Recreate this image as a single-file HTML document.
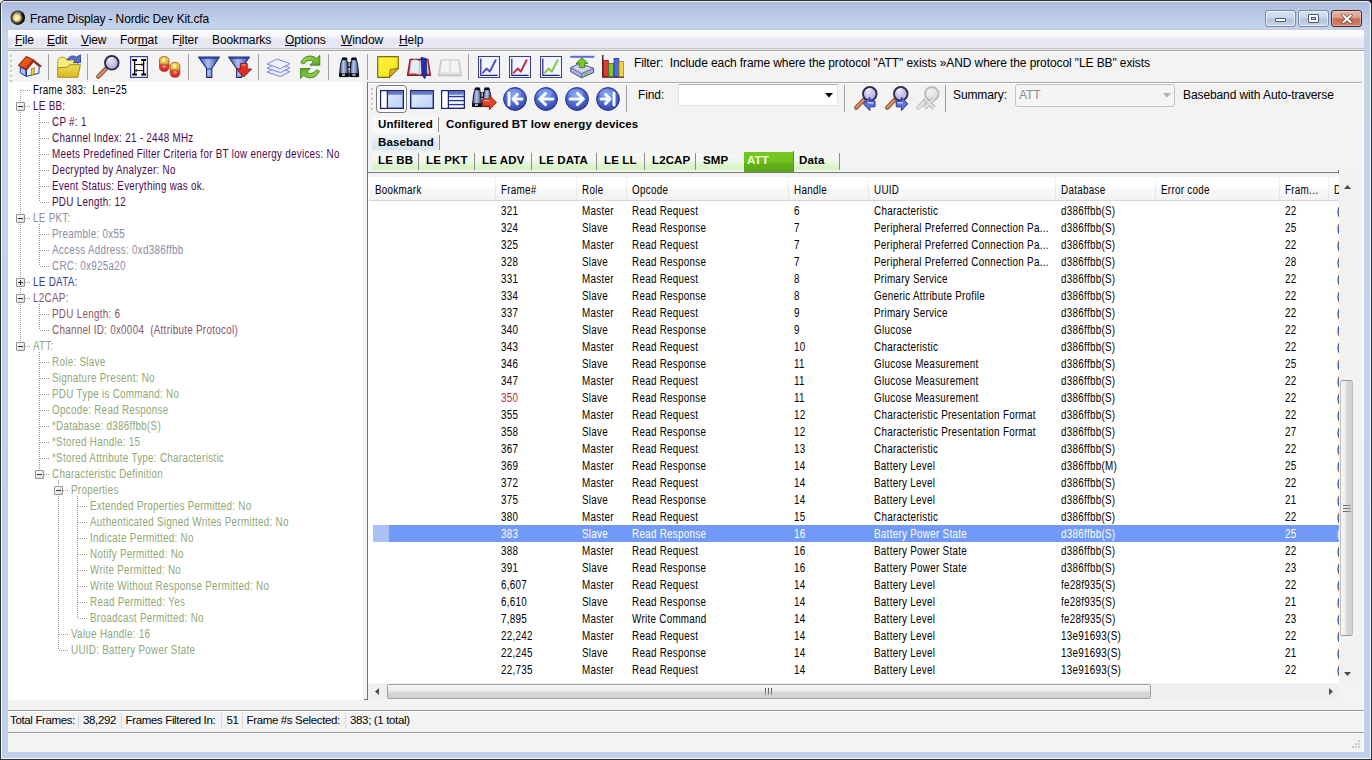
<!DOCTYPE html>
<html><head><meta charset="utf-8"><title>Frame Display - Nordic Dev Kit.cfa</title>
<style>
*{box-sizing:border-box;margin:0;padding:0}
html,body{width:1372px;height:760px;overflow:hidden;background:#1e2226}
body{position:relative;font-family:"Liberation Sans",sans-serif;font-size:11px;color:#000;-webkit-font-smoothing:antialiased}
.a{position:absolute}
.t{position:absolute;white-space:pre;line-height:16px;height:16px}
.ui{font-size:12px;letter-spacing:-0.1px}
.ms{font-size:12px;letter-spacing:.35px;transform:scaleX(.82);transform-origin:0 50%}
.b{font-weight:700}
.st{font-size:11.5px;letter-spacing:-0.35px}
#frame{left:0;top:0;width:1372px;height:760px;border:1px solid #2c3236;border-radius:5px 5px 1px 1px;background:linear-gradient(#b0bad6 0px,#b3c0e0 6px,#bccbe6 16px,#c5d4eb 25px,#c2cfe4 28px,#c3d3ea 31px,#bfd1ea 100%)}
#frame2{left:1px;top:1px;width:1370px;height:758px;border:1px solid rgba(255,255,255,.8);border-radius:4px 4px 1px 1px}
#client{left:8px;top:30px;width:1356px;height:722px;background:#f3f3f3}
#menubar{left:8px;top:30px;width:1356px;height:21px;background:linear-gradient(#fdfdfe 0,#f8f8fc 6px,#e9e9f4 9px,#e6e6f2 13px,#e9e9f4 18px,#c4c4cc 18px,#c4c4cc 19px,#eeeef2 19px,#eeeef2 20px,#a2a2a2 20px)}
#tree{left:8px;top:82px;width:355px;height:618px;background:#fff}
#list{left:369px;top:174px;width:970px;height:509px;background:#fff;overflow:hidden}
.hl{position:absolute;height:1px}
.vl{position:absolute;width:1px}
.sep{position:absolute;width:1px;background:#a0a0a0}
.row{position:absolute;left:0;height:17px;width:971px}
.row span{position:absolute;top:0;white-space:pre;line-height:17px;font-size:12px;letter-spacing:.35px;transform:scaleX(.82);transform-origin:0 50%}
.dv{position:absolute;width:1px;background-image:linear-gradient(#9a9a9a 50%,transparent 50%);background-size:1px 2px}
.dh{position:absolute;height:1px;background-image:linear-gradient(90deg,#9a9a9a 50%,transparent 50%);background-size:2px 1px}
.box{position:absolute;width:9px;height:9px;border:1px solid #919191;background:linear-gradient(135deg,#fff,#dcdcdc);border-radius:1px}
.box i{position:absolute;left:1px;top:3px;width:5px;height:1px;background:#333}
.box b{position:absolute;left:3px;top:1px;width:1px;height:5px;background:#333}
.tab{position:absolute;height:17px;line-height:16px;font-weight:700;font-size:11.5px;letter-spacing:0.12px;white-space:pre}
</style></head><body>
<div class="a" style="left:0;top:0;width:4px;height:3px;background:#e8ecf0"></div><div class="a" id="frame"></div><div class="a" id="frame2"></div>
<div class="a" id="client"></div>

<svg class="a" style="left:10px;top:10px" width="16" height="16" viewBox="0 0 16 16"><defs><radialGradient id="gl" cx="44%" cy="50%" r="56%"><stop offset="0" stop-color="#fff8c4"/><stop offset=".38" stop-color="#eee090"/><stop offset=".6" stop-color="#6a5c38"/><stop offset=".8" stop-color="#141210"/><stop offset="1" stop-color="#000"/></radialGradient></defs><circle cx="7.8" cy="7.7" r="7.2" fill="url(#gl)"/><ellipse cx="7.8" cy="3" rx="3.6" ry="1.8" fill="#b0b0a8" opacity=".55"/></svg>
<div class="t ui" style="left:30px;top:11px;color:#000;letter-spacing:-0.15px">Frame Display - Nordic Dev Kit.cfa</div>
<div class="a" style="left:1265px;top:10px;width:31px;height:17px;border:1px solid #7a8aa8;border-radius:3px;background:linear-gradient(#d6e1f1 0,#c9d6ea 48%,#b3c3dc 52%,#c6d4ea 100%);box-shadow:inset 0 0 0 1px rgba(255,255,255,.6)"><div class="a" style="left:9px;top:7px;width:11px;height:4px;border:1px solid #4a566a;background:#fff;border-radius:1px"></div></div>
<div class="a" style="left:1298px;top:10px;width:31px;height:17px;border:1px solid #7a8aa8;border-radius:3px;background:linear-gradient(#d6e1f1 0,#c9d6ea 48%,#b3c3dc 52%,#c6d4ea 100%);box-shadow:inset 0 0 0 1px rgba(255,255,255,.6)"><div class="a" style="left:9px;top:3px;width:11px;height:9px;border:1px solid #4a566a;background:#fff;border-radius:1px"><div class="a" style="left:2px;top:2px;width:5px;height:3px;border:1px solid #4a566a;background:#cfd8e8"></div></div></div>
<div class="a" style="left:1331px;top:10px;width:31px;height:17px;border:1px solid #46282a;border-radius:3px;background:linear-gradient(#e6b4a8 0,#dc9c8a 46%,#c46a4e 52%,#d08468 100%);box-shadow:inset 0 0 0 1px rgba(255,255,255,.35)"><svg class="a" style="left:9px;top:3px" width="12" height="10" viewBox="0 0 12 10"><path d="M2.4 1.4 L9.6 8.2 M9.6 1.4 L2.4 8.2" stroke="#6a4640" stroke-width="3.4" stroke-linecap="square"/><path d="M2.4 1.4 L9.6 8.2 M9.6 1.4 L2.4 8.2" stroke="#fff" stroke-width="2" stroke-linecap="square"/></svg></div>
<div class="a" id="menubar"></div>
<div class="t ui" style="left:15px;top:32px"><u>F</u>ile</div>
<div class="t ui" style="left:47px;top:32px"><u>E</u>dit</div>
<div class="t ui" style="left:81px;top:32px"><u>V</u>iew</div>
<div class="t ui" style="left:120px;top:32px">For<u>m</u>at</div>
<div class="t ui" style="left:172px;top:32px">F<u>i</u>lter</div>
<div class="t ui" style="left:212px;top:32px">Bookmarks</div>
<div class="t ui" style="left:285px;top:32px"><u>O</u>ptions</div>
<div class="t ui" style="left:341px;top:32px"><u>W</u>indow</div>
<div class="t ui" style="left:399px;top:32px"><u>H</u>elp</div>

<div class="hl" style="left:8px;top:51px;width:1356px;background:#fbfbfb"></div>
<div class="sep" style="left:48px;top:54px;height:26px"></div>
<div class="sep" style="left:87px;top:54px;height:26px"></div>
<div class="sep" style="left:188px;top:54px;height:26px"></div>
<div class="sep" style="left:258px;top:54px;height:26px"></div>
<div class="sep" style="left:328px;top:54px;height:26px"></div>
<div class="sep" style="left:468px;top:54px;height:26px"></div>
<div class="t ui" style="left:634px;top:55px">Filter:  Include each frame where the protocol "ATT" exists »AND where the protocol "LE BB" exists</div>
<div class="a" id="tree"></div>
<div class="t ms" style="left:32.5px;top:82px;color:#000">Frame 383:  Len=25</div>
<div class="dh" style="left:21px;top:90px;width:9px"></div>
<div class="t ms" style="left:32.5px;top:98px;color:#4e084e">LE BB:</div>
<div class="dh" style="left:21px;top:106px;width:9px"></div>
<div class="t ms" style="left:51.5px;top:114px;color:#4e084e">CP #: 1</div>
<div class="dh" style="left:40px;top:122px;width:9px"></div>
<div class="t ms" style="left:51.5px;top:130px;color:#4e084e">Channel Index: 21 - 2448 MHz</div>
<div class="dh" style="left:40px;top:138px;width:9px"></div>
<div class="t ms" style="left:51.5px;top:146px;color:#4e084e">Meets Predefined Filter Criteria for BT low energy devices: No</div>
<div class="dh" style="left:40px;top:154px;width:9px"></div>
<div class="t ms" style="left:51.5px;top:162px;color:#4e084e">Decrypted by Analyzer: No</div>
<div class="dh" style="left:40px;top:170px;width:9px"></div>
<div class="t ms" style="left:51.5px;top:178px;color:#4e084e">Event Status: Everything was ok.</div>
<div class="dh" style="left:40px;top:186px;width:9px"></div>
<div class="t ms" style="left:51.5px;top:194px;color:#4e084e">PDU Length: 12</div>
<div class="dh" style="left:40px;top:202px;width:9px"></div>
<div class="t ms" style="left:32.5px;top:210px;color:#8a8aa6">LE PKT:</div>
<div class="dh" style="left:21px;top:218px;width:9px"></div>
<div class="t ms" style="left:51.5px;top:226px;color:#8a8aa6">Preamble: 0x55</div>
<div class="dh" style="left:40px;top:234px;width:9px"></div>
<div class="t ms" style="left:51.5px;top:242px;color:#8a8aa6">Access Address: 0xd386ffbb</div>
<div class="dh" style="left:40px;top:250px;width:9px"></div>
<div class="t ms" style="left:51.5px;top:258px;color:#8a8aa6">CRC: 0x925a20</div>
<div class="dh" style="left:40px;top:266px;width:9px"></div>
<div class="t ms" style="left:32.5px;top:274px;color:#3a3a9a">LE DATA:</div>
<div class="dh" style="left:21px;top:282px;width:9px"></div>
<div class="t ms" style="left:32.5px;top:290px;color:#84566a">L2CAP:</div>
<div class="dh" style="left:21px;top:298px;width:9px"></div>
<div class="t ms" style="left:51.5px;top:306px;color:#84566a">PDU Length: 6</div>
<div class="dh" style="left:40px;top:314px;width:9px"></div>
<div class="t ms" style="left:51.5px;top:322px;color:#84566a">Channel ID: 0x0004  (Attribute Protocol)</div>
<div class="dh" style="left:40px;top:330px;width:9px"></div>
<div class="t ms" style="left:32.5px;top:338px;color:#8ea876">ATT:</div>
<div class="dh" style="left:21px;top:346px;width:9px"></div>
<div class="t ms" style="left:51.5px;top:354px;color:#8ea876">Role: Slave</div>
<div class="dh" style="left:40px;top:362px;width:9px"></div>
<div class="t ms" style="left:51.5px;top:370px;color:#8ea876">Signature Present: No</div>
<div class="dh" style="left:40px;top:378px;width:9px"></div>
<div class="t ms" style="left:51.5px;top:386px;color:#8ea876">PDU Type is Command: No</div>
<div class="dh" style="left:40px;top:394px;width:9px"></div>
<div class="t ms" style="left:51.5px;top:402px;color:#8ea876">Opcode: Read Response</div>
<div class="dh" style="left:40px;top:410px;width:9px"></div>
<div class="t ms" style="left:51.5px;top:418px;color:#8ea876">*Database: d386ffbb(S)</div>
<div class="dh" style="left:40px;top:426px;width:9px"></div>
<div class="t ms" style="left:51.5px;top:434px;color:#8ea876">*Stored Handle: 15</div>
<div class="dh" style="left:40px;top:442px;width:9px"></div>
<div class="t ms" style="left:51.5px;top:450px;color:#8ea876">*Stored Attribute Type: Characteristic</div>
<div class="dh" style="left:40px;top:458px;width:9px"></div>
<div class="t ms" style="left:51.5px;top:466px;color:#8ea876">Characteristic Definition</div>
<div class="dh" style="left:40px;top:474px;width:9px"></div>
<div class="t ms" style="left:70.5px;top:482px;color:#8ea876">Properties</div>
<div class="dh" style="left:59px;top:490px;width:9px"></div>
<div class="t ms" style="left:89.5px;top:498px;color:#8ea876">Extended Properties Permitted: No</div>
<div class="dh" style="left:78px;top:506px;width:9px"></div>
<div class="t ms" style="left:89.5px;top:514px;color:#8ea876">Authenticated Signed Writes Permitted: No</div>
<div class="dh" style="left:78px;top:522px;width:9px"></div>
<div class="t ms" style="left:89.5px;top:530px;color:#8ea876">Indicate Permitted: No</div>
<div class="dh" style="left:78px;top:538px;width:9px"></div>
<div class="t ms" style="left:89.5px;top:546px;color:#8ea876">Notify Permitted: No</div>
<div class="dh" style="left:78px;top:554px;width:9px"></div>
<div class="t ms" style="left:89.5px;top:562px;color:#8ea876">Write Permitted: No</div>
<div class="dh" style="left:78px;top:570px;width:9px"></div>
<div class="t ms" style="left:89.5px;top:578px;color:#8ea876">Write Without Response Permitted: No</div>
<div class="dh" style="left:78px;top:586px;width:9px"></div>
<div class="t ms" style="left:89.5px;top:594px;color:#8ea876">Read Permitted: Yes</div>
<div class="dh" style="left:78px;top:602px;width:9px"></div>
<div class="t ms" style="left:89.5px;top:610px;color:#8ea876">Broadcast Permitted: No</div>
<div class="dh" style="left:78px;top:618px;width:9px"></div>
<div class="t ms" style="left:70.5px;top:626px;color:#8ea876">Value Handle: 16</div>
<div class="dh" style="left:59px;top:634px;width:9px"></div>
<div class="t ms" style="left:70.5px;top:642px;color:#8ea876">UUID: Battery Power State</div>
<div class="dh" style="left:59px;top:650px;width:9px"></div>
<div class="dv" style="left:20px;top:90px;height:256px"></div>
<div class="dv" style="left:39px;top:112px;height:90px"></div>
<div class="dv" style="left:39px;top:224px;height:42px"></div>
<div class="dv" style="left:39px;top:304px;height:26px"></div>
<div class="dv" style="left:39px;top:352px;height:122px"></div>
<div class="dv" style="left:58px;top:480px;height:170px"></div>
<div class="dv" style="left:77px;top:496px;height:122px"></div>
<div class="box" style="left:16px;top:102px"><i></i></div>
<div class="box" style="left:16px;top:214px"><i></i></div>
<div class="box" style="left:16px;top:278px"><i></i><b></b></div>
<div class="box" style="left:16px;top:294px"><i></i></div>
<div class="box" style="left:16px;top:342px"><i></i></div>
<div class="box" style="left:35px;top:470px"><i></i></div>
<div class="box" style="left:54px;top:486px"><i></i></div>
<div class="a" style="left:364px;top:82px;width:3px;height:620px;background:#f3f3f3"></div>
<div class="vl" style="left:367px;top:54px;height:26px;background:#a0a0a0"></div>
<div class="vl" style="left:367px;top:82px;height:618px;background:#757575"></div>
<div class="hl" style="left:364px;top:699px;width:4px;background:#757575"></div>
<div class="hl" style="left:368px;top:82px;width:996px;background:#a9a9a9"></div>
<div class="hl" style="left:368px;top:83px;width:996px;background:#fff"></div>
<div class="sep" style="left:626px;top:85px;height:27px"></div>
<div class="sep" style="left:844px;top:85px;height:27px"></div>
<div class="sep" style="left:945px;top:85px;height:27px"></div>
<div class="t ui" style="left:638px;top:87px">Find:</div>
<div class="a" style="left:678px;top:84px;width:160px;height:22px;background:#fff;border:1px solid #e3e3e3;border-top-color:#abadb3"><svg class="a" style="left:146px;top:8px" width="8" height="5"><path d="M0 0h8L4 4.5z" fill="#000"/></svg></div>
<div class="t ui" style="left:953px;top:87px">Summary:</div>
<div class="a" style="left:1015px;top:84px;width:160px;height:23px;background:#f5f5f5;border:1px solid #c3c3c3;border-radius:3px"><div class="t ui" style="left:3px;top:2px;color:#8c8c8c">ATT</div><svg class="a" style="left:147px;top:8px" width="8" height="5"><path d="M0 0h8L4 4.5z" fill="#b0b0b0"/></svg></div>
<div class="t ui" style="left:1183px;top:87px">Baseband with Auto-traverse</div>
<div class="a" style="left:372px;top:117px;width:66px;height:16px;background:#f8f8f8"></div>
<div class="tab" style="left:378px;top:116px">Unfiltered</div>
<div class="sep" style="left:438px;top:117px;height:15px;background:#8c8c8c"></div>
<div class="tab" style="left:446px;top:116px">Configured BT low energy devices</div>
<div class="a" style="left:372px;top:135px;width:66px;height:15px;background:linear-gradient(#eef3f9,#deebf7 60%,#d5e6f6)"></div>
<div class="tab" style="left:378px;top:134px">Baseband</div>
<div class="sep" style="left:439px;top:135px;height:15px;background:#8c8c8c"></div>
<div class="a" style="left:372px;top:153px;width:46px;height:17px;background:linear-gradient(#f7f8f6 0,#f1f6ee 45%,#dcf4cc 75%,#d4f3c0 100%)"></div>
<div class="tab" style="left:378px;top:152px">LE BB</div>
<div class="sep" style="left:418px;top:153px;height:17px;background:#8c8c8c"></div>
<div class="a" style="left:419px;top:153px;width:55px;height:17px;background:linear-gradient(#f7f8f6 0,#f1f6ee 45%,#dcf4cc 75%,#d4f3c0 100%)"></div>
<div class="tab" style="left:426px;top:152px">LE PKT</div>
<div class="sep" style="left:474px;top:153px;height:17px;background:#8c8c8c"></div>
<div class="a" style="left:475px;top:153px;width:56px;height:17px;background:linear-gradient(#f7f8f6 0,#f1f6ee 45%,#dcf4cc 75%,#d4f3c0 100%)"></div>
<div class="tab" style="left:482px;top:152px">LE ADV</div>
<div class="sep" style="left:531px;top:153px;height:17px;background:#8c8c8c"></div>
<div class="a" style="left:532px;top:153px;width:64px;height:17px;background:linear-gradient(#f7f8f6 0,#f1f6ee 45%,#dcf4cc 75%,#d4f3c0 100%)"></div>
<div class="tab" style="left:539px;top:152px">LE DATA</div>
<div class="sep" style="left:596px;top:153px;height:17px;background:#8c8c8c"></div>
<div class="a" style="left:597px;top:153px;width:47px;height:17px;background:linear-gradient(#f7f8f6 0,#f1f6ee 45%,#dcf4cc 75%,#d4f3c0 100%)"></div>
<div class="tab" style="left:604px;top:152px">LE LL</div>
<div class="sep" style="left:644px;top:153px;height:17px;background:#8c8c8c"></div>
<div class="a" style="left:645px;top:153px;width:50px;height:17px;background:linear-gradient(#f7f8f6 0,#f1f6ee 45%,#dcf4cc 75%,#d4f3c0 100%)"></div>
<div class="tab" style="left:652px;top:152px">L2CAP</div>
<div class="sep" style="left:695px;top:153px;height:17px;background:#8c8c8c"></div>
<div class="a" style="left:696px;top:153px;width:48px;height:17px;background:linear-gradient(#f7f8f6 0,#f1f6ee 45%,#dcf4cc 75%,#d4f3c0 100%)"></div>
<div class="tab" style="left:703px;top:152px">SMP</div>
<div class="sep" style="left:744px;top:153px;height:17px;background:#8c8c8c"></div>
<div class="a" style="left:744px;top:152px;width:49px;height:20px;background:linear-gradient(#74c820 0,#70c21e 50%,#62b01a 58%,#5aa616 100%)"></div>
<div class="tab" style="left:747px;top:152px;color:#f2ffd8">ATT</div>
<div class="sep" style="left:793px;top:151px;height:21px;background:#6c7c64"></div>
<div class="a" style="left:794px;top:153px;width:45px;height:17px;background:linear-gradient(#f7f8f6 0,#f1f6ee 45%,#dcf4cc 75%,#d4f3c0 100%)"></div>
<div class="tab" style="left:799px;top:152px">Data</div>
<div class="sep" style="left:839px;top:153px;height:17px;background:#8c8c8c"></div>
<div class="hl" style="left:368px;top:172px;width:971px;background:#7a7a7a"></div>
<div class="vl" style="left:1338px;top:170px;height:3px;background:#7a7a7a"></div>
<div class="a" style="left:368px;top:177px;width:1px;height:507px;background:#fff"></div>
<div class="a" id="list">
<div class="a" style="left:0;top:0;width:971px;height:3px;background:#f3f3f3"></div>
<div class="a" style="left:0;top:3px;width:971px;height:24px;background:linear-gradient(#fff 0,#fff 45%,#f8f8f9 55%,#f3f3f4 100%);border-bottom:1px solid #d5d5d5"></div>
<div class="t ms" style="left:6px;top:8px">Bookmark</div>
<div class="t ms" style="left:132px;top:8px">Frame#</div>
<div class="t ms" style="left:213px;top:8px">Role</div>
<div class="t ms" style="left:263px;top:8px">Opcode</div>
<div class="t ms" style="left:425px;top:8px">Handle</div>
<div class="t ms" style="left:505px;top:8px">UUID</div>
<div class="t ms" style="left:692px;top:8px">Database</div>
<div class="t ms" style="left:792px;top:8px">Error code</div>
<div class="t ms" style="left:916px;top:8px">Fram...</div>
<div class="t ms" style="left:965px;top:8px">D</div>
<div class="vl" style="left:126px;top:3px;height:23px;background:linear-gradient(#f4f4f4,#e3e4e6)"></div>
<div class="vl" style="left:207px;top:3px;height:23px;background:linear-gradient(#f4f4f4,#e3e4e6)"></div>
<div class="vl" style="left:257px;top:3px;height:23px;background:linear-gradient(#f4f4f4,#e3e4e6)"></div>
<div class="vl" style="left:419px;top:3px;height:23px;background:linear-gradient(#f4f4f4,#e3e4e6)"></div>
<div class="vl" style="left:499px;top:3px;height:23px;background:linear-gradient(#f4f4f4,#e3e4e6)"></div>
<div class="vl" style="left:686px;top:3px;height:23px;background:linear-gradient(#f4f4f4,#e3e4e6)"></div>
<div class="vl" style="left:786px;top:3px;height:23px;background:linear-gradient(#f4f4f4,#e3e4e6)"></div>
<div class="vl" style="left:910px;top:3px;height:23px;background:linear-gradient(#f4f4f4,#e3e4e6)"></div>
<div class="vl" style="left:959px;top:3px;height:23px;background:linear-gradient(#f4f4f4,#e3e4e6)"></div>
<div class="row" style="top:29px">
<span style="left:132px">321</span>
<span style="left:213px">Master</span>
<span style="left:263px">Read Request</span>
<span style="left:425px">6</span>
<span style="left:505px">Characteristic</span>
<span style="left:692px">d386ffbb(S)</span>
<span style="left:916px">22</span>
<span style="left:968px">(</span>
</div>
<div class="row" style="top:46px">
<span style="left:132px">324</span>
<span style="left:213px">Slave</span>
<span style="left:263px">Read Response</span>
<span style="left:425px">7</span>
<span style="left:505px">Peripheral Preferred Connection Pa...</span>
<span style="left:692px">d386ffbb(S)</span>
<span style="left:916px">25</span>
<span style="left:968px">(</span>
</div>
<div class="row" style="top:63px">
<span style="left:132px">325</span>
<span style="left:213px">Master</span>
<span style="left:263px">Read Request</span>
<span style="left:425px">7</span>
<span style="left:505px">Peripheral Preferred Connection Pa...</span>
<span style="left:692px">d386ffbb(S)</span>
<span style="left:916px">22</span>
<span style="left:968px">(</span>
</div>
<div class="row" style="top:80px">
<span style="left:132px">328</span>
<span style="left:213px">Slave</span>
<span style="left:263px">Read Response</span>
<span style="left:425px">7</span>
<span style="left:505px">Peripheral Preferred Connection Pa...</span>
<span style="left:692px">d386ffbb(S)</span>
<span style="left:916px">28</span>
<span style="left:968px">(</span>
</div>
<div class="row" style="top:97px">
<span style="left:132px">331</span>
<span style="left:213px">Master</span>
<span style="left:263px">Read Request</span>
<span style="left:425px">8</span>
<span style="left:505px">Primary Service</span>
<span style="left:692px">d386ffbb(S)</span>
<span style="left:916px">22</span>
<span style="left:968px">(</span>
</div>
<div class="row" style="top:114px">
<span style="left:132px">334</span>
<span style="left:213px">Slave</span>
<span style="left:263px">Read Response</span>
<span style="left:425px">8</span>
<span style="left:505px">Generic Attribute Profile</span>
<span style="left:692px">d386ffbb(S)</span>
<span style="left:916px">22</span>
<span style="left:968px">(</span>
</div>
<div class="row" style="top:131px">
<span style="left:132px">337</span>
<span style="left:213px">Master</span>
<span style="left:263px">Read Request</span>
<span style="left:425px">9</span>
<span style="left:505px">Primary Service</span>
<span style="left:692px">d386ffbb(S)</span>
<span style="left:916px">22</span>
<span style="left:968px">(</span>
</div>
<div class="row" style="top:148px">
<span style="left:132px">340</span>
<span style="left:213px">Slave</span>
<span style="left:263px">Read Response</span>
<span style="left:425px">9</span>
<span style="left:505px">Glucose</span>
<span style="left:692px">d386ffbb(S)</span>
<span style="left:916px">22</span>
<span style="left:968px">(</span>
</div>
<div class="row" style="top:165px">
<span style="left:132px">343</span>
<span style="left:213px">Master</span>
<span style="left:263px">Read Request</span>
<span style="left:425px">10</span>
<span style="left:505px">Characteristic</span>
<span style="left:692px">d386ffbb(S)</span>
<span style="left:916px">22</span>
<span style="left:968px">(</span>
</div>
<div class="row" style="top:182px">
<span style="left:132px">346</span>
<span style="left:213px">Slave</span>
<span style="left:263px">Read Response</span>
<span style="left:425px">11</span>
<span style="left:505px">Glucose Measurement</span>
<span style="left:692px">d386ffbb(S)</span>
<span style="left:916px">25</span>
<span style="left:968px">(</span>
</div>
<div class="row" style="top:199px">
<span style="left:132px">347</span>
<span style="left:213px">Master</span>
<span style="left:263px">Read Request</span>
<span style="left:425px">11</span>
<span style="left:505px">Glucose Measurement</span>
<span style="left:692px">d386ffbb(S)</span>
<span style="left:916px">22</span>
<span style="left:968px">(</span>
</div>
<div class="row" style="top:216px">
<span style="left:132px;color:#b03040">350</span>
<span style="left:213px">Slave</span>
<span style="left:263px">Read Response</span>
<span style="left:425px">11</span>
<span style="left:505px">Glucose Measurement</span>
<span style="left:692px">d386ffbb(S)</span>
<span style="left:916px">22</span>
<span style="left:968px">(</span>
</div>
<div class="row" style="top:233px">
<span style="left:132px">355</span>
<span style="left:213px">Master</span>
<span style="left:263px">Read Request</span>
<span style="left:425px">12</span>
<span style="left:505px">Characteristic Presentation Format</span>
<span style="left:692px">d386ffbb(S)</span>
<span style="left:916px">22</span>
<span style="left:968px">(</span>
</div>
<div class="row" style="top:250px">
<span style="left:132px">358</span>
<span style="left:213px">Slave</span>
<span style="left:263px">Read Response</span>
<span style="left:425px">12</span>
<span style="left:505px">Characteristic Presentation Format</span>
<span style="left:692px">d386ffbb(S)</span>
<span style="left:916px">27</span>
<span style="left:968px">(</span>
</div>
<div class="row" style="top:267px">
<span style="left:132px">367</span>
<span style="left:213px">Master</span>
<span style="left:263px">Read Request</span>
<span style="left:425px">13</span>
<span style="left:505px">Characteristic</span>
<span style="left:692px">d386ffbb(S)</span>
<span style="left:916px">22</span>
<span style="left:968px">(</span>
</div>
<div class="row" style="top:284px">
<span style="left:132px">369</span>
<span style="left:213px">Master</span>
<span style="left:263px">Read Response</span>
<span style="left:425px">14</span>
<span style="left:505px">Battery Level</span>
<span style="left:692px">d386ffbb(M)</span>
<span style="left:916px">25</span>
<span style="left:968px">(</span>
</div>
<div class="row" style="top:301px">
<span style="left:132px">372</span>
<span style="left:213px">Master</span>
<span style="left:263px">Read Request</span>
<span style="left:425px">14</span>
<span style="left:505px">Battery Level</span>
<span style="left:692px">d386ffbb(S)</span>
<span style="left:916px">22</span>
<span style="left:968px">(</span>
</div>
<div class="row" style="top:318px">
<span style="left:132px">375</span>
<span style="left:213px">Slave</span>
<span style="left:263px">Read Response</span>
<span style="left:425px">14</span>
<span style="left:505px">Battery Level</span>
<span style="left:692px">d386ffbb(S)</span>
<span style="left:916px">21</span>
<span style="left:968px">(</span>
</div>
<div class="row" style="top:335px">
<span style="left:132px">380</span>
<span style="left:213px">Master</span>
<span style="left:263px">Read Request</span>
<span style="left:425px">15</span>
<span style="left:505px">Characteristic</span>
<span style="left:692px">d386ffbb(S)</span>
<span style="left:916px">22</span>
<span style="left:968px">(</span>
</div>
<div class="a" style="left:4px;top:351px;width:16px;height:17px;background:#a9c1f6"></div>
<div class="a" style="left:20px;top:351px;width:951px;height:17px;background:#7199f7"></div>
<div class="row" style="top:352px;color:#fff">
<span style="left:132px">383</span>
<span style="left:213px">Slave</span>
<span style="left:263px">Read Response</span>
<span style="left:425px">16</span>
<span style="left:505px">Battery Power State</span>
<span style="left:692px">d386ffbb(S)</span>
<span style="left:916px">25</span>
<span style="left:968px">(</span>
</div>
<div class="row" style="top:369px">
<span style="left:132px">388</span>
<span style="left:213px">Master</span>
<span style="left:263px">Read Request</span>
<span style="left:425px">16</span>
<span style="left:505px">Battery Power State</span>
<span style="left:692px">d386ffbb(S)</span>
<span style="left:916px">22</span>
<span style="left:968px">(</span>
</div>
<div class="row" style="top:386px">
<span style="left:132px">391</span>
<span style="left:213px">Slave</span>
<span style="left:263px">Read Response</span>
<span style="left:425px">16</span>
<span style="left:505px">Battery Power State</span>
<span style="left:692px">d386ffbb(S)</span>
<span style="left:916px">23</span>
<span style="left:968px">(</span>
</div>
<div class="row" style="top:403px">
<span style="left:132px">6,607</span>
<span style="left:213px">Master</span>
<span style="left:263px">Read Request</span>
<span style="left:425px">14</span>
<span style="left:505px">Battery Level</span>
<span style="left:692px">fe28f935(S)</span>
<span style="left:916px">22</span>
<span style="left:968px">(</span>
</div>
<div class="row" style="top:420px">
<span style="left:132px">6,610</span>
<span style="left:213px">Slave</span>
<span style="left:263px">Read Response</span>
<span style="left:425px">14</span>
<span style="left:505px">Battery Level</span>
<span style="left:692px">fe28f935(S)</span>
<span style="left:916px">21</span>
<span style="left:968px">(</span>
</div>
<div class="row" style="top:437px">
<span style="left:132px">7,895</span>
<span style="left:213px">Master</span>
<span style="left:263px">Write Command</span>
<span style="left:425px">14</span>
<span style="left:505px">Battery Level</span>
<span style="left:692px">fe28f935(S)</span>
<span style="left:916px">23</span>
<span style="left:968px">(</span>
</div>
<div class="row" style="top:454px">
<span style="left:132px">22,242</span>
<span style="left:213px">Master</span>
<span style="left:263px">Read Request</span>
<span style="left:425px">14</span>
<span style="left:505px">Battery Level</span>
<span style="left:692px">13e91693(S)</span>
<span style="left:916px">22</span>
<span style="left:968px">(</span>
</div>
<div class="row" style="top:471px">
<span style="left:132px">22,245</span>
<span style="left:213px">Slave</span>
<span style="left:263px">Read Response</span>
<span style="left:425px">14</span>
<span style="left:505px">Battery Level</span>
<span style="left:692px">13e91693(S)</span>
<span style="left:916px">21</span>
<span style="left:968px">(</span>
</div>
<div class="row" style="top:488px">
<span style="left:132px">22,735</span>
<span style="left:213px">Master</span>
<span style="left:263px">Read Request</span>
<span style="left:425px">14</span>
<span style="left:505px">Battery Level</span>
<span style="left:692px">13e91693(S)</span>
<span style="left:916px">22</span>
<span style="left:968px">(</span>
</div>
</div>
<div class="a" style="left:1339px;top:174px;width:25px;height:509px;background:#f1f1f1"></div>
<div class="a" style="left:1362px;top:51px;width:2px;height:701px;background:#f9f9f9"></div>
<svg class="a" style="left:1344px;top:185px" width="7" height="4"><path d="M0 4L3.5 0L7 4z" fill="#4c4c4c"/></svg>
<svg class="a" style="left:1344px;top:672px" width="7" height="4"><path d="M0 0h7L3.5 4z" fill="#4c4c4c"/></svg>
<div class="a" style="left:1340px;top:380px;width:13px;height:256px;border:1px solid #bcbcbc;border-top-color:#9c9c9c;border-bottom-color:#9c9c9c;border-radius:2px;background:linear-gradient(90deg,#f8f8f8 0,#ececec 40%,#d6d6d6 55%,#cfcfcf 100%)"></div>
<div class="hl" style="left:1343px;top:505px;width:8px;background:linear-gradient(90deg,#5a5a5a,#9a9a9a)"></div>
<div class="hl" style="left:1343px;top:508px;width:8px;background:linear-gradient(90deg,#5a5a5a,#9a9a9a)"></div>
<div class="hl" style="left:1343px;top:511px;width:8px;background:linear-gradient(90deg,#5a5a5a,#9a9a9a)"></div>
<div class="a" style="left:368px;top:684px;width:971px;height:15px;background:#efefef"></div>
<svg class="a" style="left:375px;top:688px" width="4" height="7"><path d="M4 0v7L0 3.5z" fill="#4c4c4c"/></svg>
<svg class="a" style="left:1329px;top:688px" width="4" height="7"><path d="M0 0v7l4-3.5z" fill="#4c4c4c"/></svg>
<div class="a" style="left:387px;top:684px;width:764px;height:15px;border:1px solid #9e9e9e;border-radius:2px;background:linear-gradient(#f6f6f6 0,#ebebeb 45%,#d8d8d8 55%,#d2d2d2 100%)"></div>
<div class="vl" style="left:765px;top:688px;height:7px;background:linear-gradient(#4a4a4a,#9a9a9a)"></div>
<div class="vl" style="left:768px;top:688px;height:7px;background:linear-gradient(#4a4a4a,#9a9a9a)"></div>
<div class="vl" style="left:771px;top:688px;height:7px;background:linear-gradient(#4a4a4a,#9a9a9a)"></div>
<div class="a" style="left:1358px;top:746px;width:2px;height:2px;background:#cccccc"></div>
<div class="a" style="left:1355px;top:746px;width:2px;height:2px;background:#cccccc"></div>
<div class="a" style="left:1358px;top:743px;width:2px;height:2px;background:#cccccc"></div>
<div class="a" style="left:1352px;top:746px;width:2px;height:2px;background:#cccccc"></div>
<div class="a" style="left:1355px;top:743px;width:2px;height:2px;background:#cccccc"></div>
<div class="a" style="left:1358px;top:740px;width:2px;height:2px;background:#cccccc"></div>
<div class="hl" style="left:8px;top:710px;width:1356px;background:#9a9a9a"></div>
<div class="hl" style="left:8px;top:711px;width:1356px;background:#fff"></div>
<div class="hl" style="left:8px;top:732px;width:1356px;background:#9a9a9a"></div>
<div class="hl" style="left:8px;top:733px;width:1356px;background:#fff"></div>
<div class="t st" style="left:10px;top:712px">Total Frames:</div>
<div class="t st" style="left:83px;top:712px">38,292</div>
<div class="t st" style="left:125.5px;top:712px">Frames Filtered In:</div>
<div class="t st" style="left:226.5px;top:712px">51</div>
<div class="t st" style="left:246.5px;top:712px">Frame #s Selected:</div>
<div class="t st" style="left:350px;top:712px">383; (1 total)</div>
<div class="vl" style="left:78px;top:713px;height:16px;background:#dadada"></div>
<div class="vl" style="left:121px;top:713px;height:16px;background:#dadada"></div>
<div class="vl" style="left:221px;top:713px;height:16px;background:#dadada"></div>
<div class="vl" style="left:242px;top:713px;height:16px;background:#dadada"></div>
<div class="vl" style="left:345px;top:713px;height:16px;background:#dadada"></div>
<svg width="0" height="0" style="position:absolute"><defs>
<linearGradient id="gRoof" x1="0" y1="0" x2="1" y2="1"><stop offset="0" stop-color="#f47a1c"/><stop offset="1" stop-color="#d9301c"/></linearGradient>
<linearGradient id="gFold" x1="0" y1="0" x2="0" y2="1"><stop offset="0" stop-color="#f0de50"/><stop offset="1" stop-color="#d8b824"/></linearGradient>
<radialGradient id="gLens" cx="40%" cy="35%" r="70%"><stop offset="0" stop-color="#e6e2f6"/><stop offset="1" stop-color="#a8a4d6"/></radialGradient>
<radialGradient id="gLensD" cx="40%" cy="35%" r="70%"><stop offset="0" stop-color="#f2f2f2"/><stop offset="1" stop-color="#dcdcdc"/></radialGradient>
<linearGradient id="gFun" x1="0" y1="0" x2="1" y2="0"><stop offset="0" stop-color="#3c55b8"/><stop offset=".45" stop-color="#a9c0f2"/><stop offset="1" stop-color="#3048a8"/></linearGradient>
<linearGradient id="gCyl" x1="0" y1="0" x2="0" y2="1"><stop offset="0" stop-color="#e8d84a"/><stop offset=".45" stop-color="#d8b23a"/><stop offset=".55" stop-color="#e04a34"/><stop offset="1" stop-color="#c82a22"/></linearGradient>
<linearGradient id="gGrn" x1="0" y1="0" x2="1" y2="1"><stop offset="0" stop-color="#a6e04a"/><stop offset="1" stop-color="#5aa828"/></linearGradient>
<linearGradient id="gBin" x1="0" y1="0" x2="1" y2="0"><stop offset="0" stop-color="#3a4a7a"/><stop offset=".45" stop-color="#b9c6ee"/><stop offset="1" stop-color="#33406c"/></linearGradient>
<linearGradient id="gWin" x1="0" y1="0" x2="1" y2="1"><stop offset="0" stop-color="#e6f0fb"/><stop offset="1" stop-color="#b7d3f3"/></linearGradient>
<linearGradient id="gTit" x1="0" y1="0" x2="0" y2="1"><stop offset="0" stop-color="#4a58b4"/><stop offset="1" stop-color="#8a9ee0"/></linearGradient>
<radialGradient id="gNav" cx="45%" cy="35%" r="70%"><stop offset="0" stop-color="#7c9cf0"/><stop offset=".6" stop-color="#4a64cc"/><stop offset="1" stop-color="#2c3c98"/></radialGradient>
<linearGradient id="gHan" x1="0" y1="0" x2="1" y2="1"><stop offset="0" stop-color="#f2b48c"/><stop offset="1" stop-color="#c8643c"/></linearGradient>
<linearGradient id="gNote" x1="0" y1="0" x2="1" y2="1"><stop offset="0" stop-color="#fff23c"/><stop offset="1" stop-color="#f6e21c"/></linearGradient>
</defs></svg><div class="a" style="left:10px;top:55px;width:2px;height:2px;background:#c4c4c4;box-shadow:1px 1px 0 #fff"></div><div class="a" style="left:10px;top:60px;width:2px;height:2px;background:#c4c4c4;box-shadow:1px 1px 0 #fff"></div><div class="a" style="left:10px;top:65px;width:2px;height:2px;background:#c4c4c4;box-shadow:1px 1px 0 #fff"></div><div class="a" style="left:10px;top:70px;width:2px;height:2px;background:#c4c4c4;box-shadow:1px 1px 0 #fff"></div><div class="a" style="left:10px;top:75px;width:2px;height:2px;background:#c4c4c4;box-shadow:1px 1px 0 #fff"></div><div class="a" style="left:10px;top:80px;width:2px;height:2px;background:#c4c4c4;box-shadow:1px 1px 0 #fff"></div><svg class="a" style="left:18px;top:55px" width="24" height="24" viewBox="0 0 24 24"><path d="M2.3 12.2 L8.3 15 L8.3 21.4 L2.3 17.9 Z" fill="#a4bff0" stroke="#1c3a8a" stroke-width="1" stroke-linejoin="round"/><path d="M8.3 14.3 L15.4 6.7 L21.2 11.7 L20.8 18.4 L8.3 21.4 Z" fill="#eef0fb" stroke="#1c3a8a" stroke-width="1" stroke-linejoin="round"/><path d="M8.3 15 V21.4" stroke="#1c3a8a" stroke-width="1.3"/><path d="M13.3 13.9 L16.2 12.8 L16.2 19.2 L13.3 20 Z" fill="#f2d040" stroke="#a07810" stroke-width=".8"/><path d="M0.6 10.4 L8.3 1.5 L15.4 5.1 L8.3 14.3 Z" fill="url(#gRoof)" stroke="#8a2414" stroke-width="1.1" stroke-linejoin="round"/><path d="M8.3 14.6 L15.4 5.6 L22.6 11.2" fill="none" stroke="#a02818" stroke-width="2" stroke-linejoin="round" stroke-linecap="round"/></svg><svg class="a" style="left:57px;top:54px" width="25" height="24" viewBox="0 0 25 24"><path d="M0.7 6.2 L3.2 3.3 L7.4 3.3 L10 6 L20.6 6 L20.6 14 L0.7 16 Z" fill="#f5ef80" stroke="#b09a24" stroke-width="1" stroke-linejoin="round"/><path d="M0.7 23.3 L0.7 14.2 Q0.7 13.6 1.6 13.6 L10.8 13.2 L12.6 10.7 L23.4 10.7 L20.8 23.3 Z" fill="url(#gFold)" stroke="#a88c1c" stroke-width="1" stroke-linejoin="round"/><path d="M10.2 5.4 Q14.4 -0.2 19.6 3.2 L23.4 0.8 L23.6 8.6 L16.4 8.6 L18.4 6.2 Q14.6 3.6 11.8 6 Z" fill="#5470d8" stroke="#2a3c9c" stroke-width=".9" stroke-linejoin="round"/></svg><svg class="a" style="left:95px;top:55px" width="25" height="26" viewBox="0 0 25 26"><path d="M3.2 21.8 L10.6 14" stroke="#8a4a2c" stroke-width="4.2" stroke-linecap="round"/><path d="M3.4 21.6 L10.4 14.2" stroke="url(#gHan)" stroke-width="2.4" stroke-linecap="round"/><circle cx="16.8" cy="7.8" r="6.8" fill="url(#gLens)" stroke="#2c2c50" stroke-width="1.9"/><path d="M13.2 5 Q15.4 2.4 18.4 3" stroke="#fff" stroke-width="1.4" fill="none" opacity=".8"/></svg><svg class="a" style="left:130px;top:56px" width="18" height="22" viewBox="0 0 18 22"><rect x=".6" y=".6" width="16.8" height="20.8" fill="#fdfdff" stroke="#3a3e9c" stroke-width="1.2"/><path d="M2.2 4 H7 M11.2 4 H16 M2.2 18.6 H7 M11.2 18.6 H16" stroke="#000" stroke-width="2"/><path d="M4.6 4 V18.6 M13.6 4 V18.6" stroke="#000" stroke-width="1.3"/><path d="M5.2 8.5 H13 M5.2 14.6 H13" stroke="#111" stroke-width="1"/><path d="M11.4 7.2 L13 8.5 L11.4 9.8 M6.8 13.3 L5.2 14.6 L6.8 15.9" stroke="#111" stroke-width=".9" fill="none"/></svg><svg class="a" style="left:159px;top:56px" width="22" height="23" viewBox="0 0 22 23"><rect x="0.4" y="0.4" width="9.6" height="15" rx="4.4" ry="4" fill="url(#gCyl)" stroke="#a02a1c" stroke-width=".7"/><ellipse cx="4.6000000000000005" cy="4.4" rx="2" ry="2.2" fill="#fbf4a0" opacity=".85"/><ellipse cx="5.4" cy="10.6" rx="1.6" ry="1.4" fill="#f0a07c" opacity=".8"/><rect x="11.2" y="6.3" width="9.6" height="15" rx="4.4" ry="4" fill="url(#gCyl)" stroke="#a02a1c" stroke-width=".7"/><ellipse cx="15.399999999999999" cy="10.3" rx="2" ry="2.2" fill="#fbf4a0" opacity=".85"/><ellipse cx="16.2" cy="16.5" rx="1.6" ry="1.4" fill="#f0a07c" opacity=".8"/></svg><svg class="a" style="left:198px;top:56px" width="22" height="22" viewBox="0 0 22 22"><path d="M0.6 1 H21.4 L13.8 12.4 V21.4 H8.6 V12.4 Z" fill="url(#gFun)" stroke="#1e2c78" stroke-width="1.1" stroke-linejoin="round"/><path d="M2.4 2.1 H19.6" stroke="#2c3c98" stroke-width="1.5"/><path d="M8.6 13 H13.8" stroke="#1e2c78" stroke-width="1"/></svg><svg class="a" style="left:228px;top:56px" width="25" height="22" viewBox="0 0 25 22"><path d="M0.6 1 H21.4 L13.8 12.4 V21.4 H8.6 V12.4 Z" fill="url(#gFun)" stroke="#1e2c78" stroke-width="1.1" stroke-linejoin="round"/><path d="M2.4 2.1 H19.6" stroke="#2c3c98" stroke-width="1.5"/><path d="M8.6 13 H13.8" stroke="#1e2c78" stroke-width="1"/><path d="M12.4 7.6 H19.2 V13 H23.6 L15.8 21 L8.4 13 H12.4 Z" fill="#e02c22" stroke="#8c1410" stroke-width=".9" stroke-linejoin="round"/><path d="M13.6 9 H18" stroke="#ff9a80" stroke-width="1.2"/></svg><svg class="a" style="left:266px;top:58px" width="25" height="20" viewBox="0 0 25 20"><path d="M1 14 L11 9 L24 13.6 L14.4 18.6 Z" fill="#e4eafc" stroke="#7a88d6" stroke-width="1" stroke-linejoin="round"/><path d="M1 10 L11 5 L24 9.6 L14.4 14.6 Z" fill="#e9eefd" stroke="#7a88d6" stroke-width="1" stroke-linejoin="round"/><path d="M1 6 L11 1 L24 5.6 L14.4 10.6 Z" fill="#eef2fe" stroke="#7a88d6" stroke-width="1" stroke-linejoin="round"/></svg><svg class="a" style="left:300px;top:55px" width="21" height="24" viewBox="0 0 21 24"><path d="M0.8 7.6 Q3.8 1 10 1 Q13.6 1 16.4 3.4 L19.8 0.4 L19.8 10.2 L10 10.2 L13.4 6.8 Q11.8 5.2 9.8 5.2 Q6.2 5.2 3.8 9 Z" fill="url(#gGrn)" stroke="#3c7c1c" stroke-width=".9" stroke-linejoin="round"/><path d="M0.8 7.6 Q3.8 1 10 1 Q13.6 1 16.4 3.4 L19.8 0.4 L19.8 10.2 L10 10.2 L13.4 6.8 Q11.8 5.2 9.8 5.2 Q6.2 5.2 3.8 9 Z" transform="rotate(180 10.1 11.9)" fill="url(#gGrn)" stroke="#3c7c1c" stroke-width=".9" stroke-linejoin="round"/></svg><svg class="a" style="left:339px;top:57px" width="21" height="21" viewBox="0 0 21 21"><rect x="7" y="5" width="6.5" height="6" fill="#1c2030"/><rect x="9.3" y="5.6" width="1.8" height="4" fill="#b0b0a0"/><path d="M3.4 1.2 H7.6 L8.6 7.4 L9.4 17 V19.6 H0.6 V17 L1.6 7.4 Z" fill="url(#gBin)" stroke="#141826" stroke-width="1"/><path d="M12.8 1.2 H17 L18.6 7.4 L19.6 17 V19.6 H10.8 V17 L11.8 7.4 Z" fill="url(#gBin)" stroke="#141826" stroke-width="1"/><rect x="3.2" y=".6" width="4.6" height="2.6" fill="#0c0c14"/><rect x="12.6" y=".6" width="4.6" height="2.6" fill="#0c0c14"/><rect x=".4" y="16.2" width="9.2" height="3.6" fill="#0c0c14"/><rect x="10.6" y="16.2" width="9.2" height="3.6" fill="#0c0c14"/><rect x="3" y="16.8" width="3" height="2.2" fill="#a8a8a8"/><rect x="13.4" y="16.8" width="3" height="2.2" fill="#a8a8a8"/></svg><svg class="a" style="left:377px;top:56px" width="22" height="22" viewBox="0 0 22 22"><path d="M.7 .7 H21.3 V12.4 L12.4 21.3 H.7 Z" fill="url(#gNote)" stroke="#7a6a10" stroke-width="1.2" stroke-linejoin="round"/><path d="M21.3 12.4 L13.4 13.4 L12.4 21.3 Z" fill="#e8b02c" stroke="#7a6a10" stroke-width="1" stroke-linejoin="round"/></svg><svg class="a" style="left:407px;top:57px" width="24" height="22" viewBox="0 0 24 22"><path d="M3 2.4 H21 L23.6 18.4 H.4 Z" fill="#c83c3c" stroke="#8c1c24" stroke-width="1.1" stroke-linejoin="round"/><path d="M4.2 3.4 Q8 2 12.4 4 L12.4 17.4 Q8 15.4 2.6 16.6 Z" fill="#e4ecfa" stroke="#b0b8d0" stroke-width=".6"/><path d="M12.4 4 Q16 2 20 3.4 L21.6 16.6 Q16 15.4 12.4 17.4 Z" fill="#f0e8e8" stroke="#b0b8d0" stroke-width=".6"/><path d="M14 .4 L19.2 1.6 L19.8 17.6 L17.6 21.6 L15 18 Z" fill="#2430a0" stroke="#141c70" stroke-width=".8" stroke-linejoin="round"/></svg><svg class="a" style="left:438px;top:58px" width="24" height="19" viewBox="0 0 24 19"><path d="M3 2 H21 L23.6 17.4 H.4 Z" fill="#e4e4e4" stroke="#c6c6c6" stroke-width="1.2" stroke-linejoin="round"/><path d="M3.6 2.6 Q8 1 12 3 Q16 1 20.4 2.6 L22 15.4 Q16 14 12 16 Q8 14 2 15.4 Z" fill="#f4f4f4" stroke="#d4d4d4" stroke-width=".8"/><path d="M12 3 V16" stroke="#d0d0d0" stroke-width="1"/><path d="M1 17.6 H23" stroke="#c0c0c0" stroke-width="1.4"/></svg><svg class="a" style="left:478px;top:56px" width="22" height="22" viewBox="0 0 22 22"><rect x=".5" y=".5" width="21" height="21" fill="#f1f5fd" stroke="#3a3e9c" stroke-width="1"/><path d="M2.8 2.4 V19.4 H19.6" stroke="#20247c" stroke-width="1.2" fill="none"/><path d="M5 16.6 L8.6 12.6 L11.8 15.6 L17.6 4.2" stroke="#4a54c0" stroke-width="2" fill="none" stroke-linejoin="round" stroke-linecap="round"/></svg><svg class="a" style="left:509px;top:56px" width="22" height="22" viewBox="0 0 22 22"><rect x=".5" y=".5" width="21" height="21" fill="#f1f5fd" stroke="#3a3e9c" stroke-width="1"/><path d="M2.8 2.4 V19.4 H19.6" stroke="#20247c" stroke-width="1.2" fill="none"/><path d="M5 16.6 L8.6 12.6 L11.8 15.6 L17.6 4.2" stroke="#c02c44" stroke-width="2" fill="none" stroke-linejoin="round" stroke-linecap="round"/></svg><svg class="a" style="left:540px;top:56px" width="22" height="22" viewBox="0 0 22 22"><rect x=".5" y=".5" width="21" height="21" fill="#f1f5fd" stroke="#3a3e9c" stroke-width="1"/><path d="M2.8 2.4 V19.4 H19.6" stroke="#20247c" stroke-width="1.2" fill="none"/><path d="M5 16.6 L8.6 12.6 L11.8 15.6 L17.6 4.2" stroke="#84c43c" stroke-width="2" fill="none" stroke-linejoin="round" stroke-linecap="round"/></svg><svg class="a" style="left:570px;top:55px" width="25" height="24" viewBox="0 0 25 24"><path d="M.2 1.8 H24.4" stroke="#5a6cd4" stroke-width="2"/><path d="M.8 12.6 L9.6 8.6 L23.6 13.4 V17.6 L11.6 22.8 L.8 16.8 Z" fill="#a8b0dc" stroke="#4a548c" stroke-width="1" stroke-linejoin="round"/><path d="M.8 12.6 L9.6 8.6 L23.6 13.4 L11.6 18.4 Z" fill="#cfd4f0" stroke="#4a548c" stroke-width=".8" stroke-linejoin="round"/><path d="M11.6 18.4 V22.8" stroke="#4a548c" stroke-width=".8"/><rect x="13.4" y="18" width="4.4" height="1.8" fill="#7cc43c" transform="rotate(-22 15.6 18.9)"/><path d="M12 2.8 L18 8.4 H14.6 V12.6 H9.4 V8.4 H6 Z" fill="#7cc832" stroke="#3c7c14" stroke-width=".9" stroke-linejoin="round"/></svg><svg class="a" style="left:602px;top:55px" width="23" height="23" viewBox="0 0 23 23"><path d="M.8 0 V22 H22" stroke="#4a1018" stroke-width="1.4" fill="none"/><rect x="1.6" y="5.6" width="4.8" height="15.8" fill="#e03c34" stroke="#8c1418" stroke-width=".8"/><rect x="6.8" y="8.6" width="4.8" height="12.8" fill="#7cc832" stroke="#3c7c14" stroke-width=".8"/><rect x="12" y="3.4" width="4.8" height="18" fill="#4c6ce0" stroke="#2434a0" stroke-width=".8"/><rect x="17" y="6.6" width="4.4" height="14.8" fill="#f4d43c" stroke="#a88414" stroke-width=".8"/></svg>
<div class="a" style="left:371px;top:88px;width:2px;height:2px;background:#c4c4c4;box-shadow:1px 1px 0 #fff"></div><div class="a" style="left:371px;top:93px;width:2px;height:2px;background:#c4c4c4;box-shadow:1px 1px 0 #fff"></div><div class="a" style="left:371px;top:98px;width:2px;height:2px;background:#c4c4c4;box-shadow:1px 1px 0 #fff"></div><div class="a" style="left:371px;top:103px;width:2px;height:2px;background:#c4c4c4;box-shadow:1px 1px 0 #fff"></div><div class="a" style="left:371px;top:108px;width:2px;height:2px;background:#c4c4c4;box-shadow:1px 1px 0 #fff"></div><div class="a" style="left:376px;top:85px;width:31px;height:28px;border:1px solid #7a7a7a;border-radius:4px;background:#f6f6f6;box-shadow:inset 0 0 0 1px #fff"></div><svg class="a" style="left:380px;top:90px" width="24" height="19" viewBox="0 0 24 19"><rect x=".7" y=".7" width="22.6" height="17.6" fill="url(#gWin)" stroke="#1c2470" stroke-width="1.4"/><rect x="1.4" y="1.4" width="21.2" height="3.6" fill="url(#gTit)"/><rect x="1.4" y="1.4" width="5.6" height="16.2" fill="#fff"/><path d="M7.4 1 V18" stroke="#1c2470" stroke-width="1.3"/></svg><svg class="a" style="left:410px;top:90px" width="24" height="19" viewBox="0 0 24 19"><rect x=".7" y=".7" width="22.6" height="17.6" fill="url(#gWin)" stroke="#1c2470" stroke-width="1.4"/><rect x="1.4" y="1.4" width="21.2" height="3.6" fill="url(#gTit)"/></svg><svg class="a" style="left:441px;top:90px" width="24" height="19" viewBox="0 0 24 19"><rect x=".7" y=".7" width="22.6" height="17.6" fill="url(#gWin)" stroke="#1c2470" stroke-width="1.4"/><rect x="1.4" y="1.4" width="21.2" height="3.6" fill="url(#gTit)"/><rect x="1.4" y="1.4" width="5.6" height="16.2" fill="#fff"/><path d="M7.4 1 V18" stroke="#1c2470" stroke-width="1.3"/><path d="M8 6.6 H23 M8 10.6 H23 M8 14.6 H23" stroke="#2c3890" stroke-width="1.4"/><path d="M8 8.6 H22.6 M8 12.6 H22.6 M8 16.4 H22.6" stroke="#f4f8ff" stroke-width="1.6"/></svg><svg class="a" style="left:472px;top:87px" width="25" height="24" viewBox="0 0 25 24"><g transform="translate(0,0)"><rect x="7" y="5" width="6.5" height="6" fill="#1c2030"/><rect x="9.3" y="5.6" width="1.8" height="4" fill="#b0b0a0"/><path d="M3.4 1.2 H7.6 L8.6 7.4 L9.4 17 V19.6 H0.6 V17 L1.6 7.4 Z" fill="url(#gBin)" stroke="#141826" stroke-width="1"/><path d="M12.8 1.2 H17 L18.6 7.4 L19.6 17 V19.6 H10.8 V17 L11.8 7.4 Z" fill="url(#gBin)" stroke="#141826" stroke-width="1"/><rect x="3.2" y=".6" width="4.6" height="2.6" fill="#0c0c14"/><rect x="12.6" y=".6" width="4.6" height="2.6" fill="#0c0c14"/><rect x=".4" y="16.2" width="9.2" height="3.6" fill="#0c0c14"/><rect x="10.6" y="16.2" width="9.2" height="3.6" fill="#0c0c14"/><rect x="3" y="16.8" width="3" height="2.2" fill="#a8a8a8"/><rect x="13.4" y="16.8" width="3" height="2.2" fill="#a8a8a8"/></g><path d="M10.6 12 H17.4 V8.4 L24.4 15.6 L17.4 22.8 V19.2 H10.6 Z" fill="#e4442c" stroke="#8c1c10" stroke-width=".9" stroke-linejoin="round"/><path d="M11.8 13.6 H17" stroke="#ffa890" stroke-width="1.2"/></svg><svg class="a" style="left:503px;top:87px" width="24" height="24" viewBox="0 0 24 24"><circle cx="12" cy="12" r="11.4" fill="url(#gNav)" stroke="#24308c" stroke-width="1"/><ellipse cx="11" cy="6.4" rx="7.4" ry="4.4" fill="#a0bcff" opacity=".35"/><path d="M6 6 V18" stroke="#f4f8ff" stroke-width="3" fill="none" stroke-linecap="round" stroke-linejoin="round"/><path d="M19 12 H10.6 M14.4 7.4 L10 12 L14.4 16.6" stroke="#f4f8ff" stroke-width="3" fill="none" stroke-linecap="round" stroke-linejoin="round"/></svg><svg class="a" style="left:534px;top:87px" width="24" height="24" viewBox="0 0 24 24"><circle cx="12" cy="12" r="11.4" fill="url(#gNav)" stroke="#24308c" stroke-width="1"/><ellipse cx="11" cy="6.4" rx="7.4" ry="4.4" fill="#a0bcff" opacity=".35"/><path d="M19 12 H6 M11.6 6.4 L5.6 12 L11.6 17.6" stroke="#f4f8ff" stroke-width="3" fill="none" stroke-linecap="round" stroke-linejoin="round"/></svg><svg class="a" style="left:565px;top:87px" width="24" height="24" viewBox="0 0 24 24"><circle cx="12" cy="12" r="11.4" fill="url(#gNav)" stroke="#24308c" stroke-width="1"/><ellipse cx="11" cy="6.4" rx="7.4" ry="4.4" fill="#a0bcff" opacity=".35"/><path d="M5 12 H18 M12.4 6.4 L18.4 12 L12.4 17.6" stroke="#f4f8ff" stroke-width="3" fill="none" stroke-linecap="round" stroke-linejoin="round"/></svg><svg class="a" style="left:596px;top:87px" width="24" height="24" viewBox="0 0 24 24"><circle cx="12" cy="12" r="11.4" fill="url(#gNav)" stroke="#24308c" stroke-width="1"/><ellipse cx="11" cy="6.4" rx="7.4" ry="4.4" fill="#a0bcff" opacity=".35"/><path d="M18 6 V18" stroke="#f4f8ff" stroke-width="3" fill="none" stroke-linecap="round" stroke-linejoin="round"/><path d="M5 12 H13.4 M9.6 7.4 L14 12 L9.6 16.6" stroke="#f4f8ff" stroke-width="3" fill="none" stroke-linecap="round" stroke-linejoin="round"/></svg><svg class="a" style="left:853px;top:86px" width="25" height="26" viewBox="0 0 25 26"><path d="M3.2 21.8 L10.6 14" stroke="#8a4a2c" stroke-width="4.2" stroke-linecap="round"/><path d="M3.4 21.6 L10.4 14.2" stroke="url(#gHan)" stroke-width="2.4" stroke-linecap="round"/><circle cx="16.8" cy="7.8" r="6.8" fill="url(#gLens)" stroke="#2c2c50" stroke-width="1.9"/><path d="M13.2 5 Q15.4 2.4 18.4 3" stroke="#fff" stroke-width="1.4" fill="none" opacity=".8"/><g transform="translate(0,2.2)"><path d="M10.4 15.6 L16.8 9 L16.8 12.8 L22 12.8 L22 18.6 L16.8 18.6 L16.8 22.4 Z" fill="#5a74dc" stroke="#26349a" stroke-width="1" stroke-linejoin="round"/><path d="M15 14.6 H20.4" stroke="#dfe6ff" stroke-width="1.2"/></g></svg><svg class="a" style="left:884px;top:86px" width="25" height="26" viewBox="0 0 25 26"><path d="M3.2 21.8 L10.6 14" stroke="#8a4a2c" stroke-width="4.2" stroke-linecap="round"/><path d="M3.4 21.6 L10.4 14.2" stroke="url(#gHan)" stroke-width="2.4" stroke-linecap="round"/><circle cx="16.8" cy="7.8" r="6.8" fill="url(#gLens)" stroke="#2c2c50" stroke-width="1.9"/><path d="M13.2 5 Q15.4 2.4 18.4 3" stroke="#fff" stroke-width="1.4" fill="none" opacity=".8"/><g transform="translate(0,2.2)"><path d="M23.8 15.6 L17.4 9 L17.4 12.8 L12.2 12.8 L12.2 18.6 L17.4 18.6 L17.4 22.4 Z" fill="#5a74dc" stroke="#26349a" stroke-width="1" stroke-linejoin="round"/><path d="M13.6 14.6 H18.8" stroke="#dfe6ff" stroke-width="1.2"/></g></svg><svg class="a" style="left:915px;top:86px" width="25" height="26" viewBox="0 0 25 26"><path d="M3.2 21.8 L10.6 14" stroke="#c2c2c2" stroke-width="4.2" stroke-linecap="round"/><path d="M3.4 21.6 L10.4 14.2" stroke="#e4e4e4" stroke-width="2.4" stroke-linecap="round"/><circle cx="16.8" cy="7.8" r="6.8" fill="url(#gLensD)" stroke="#bdbdbd" stroke-width="1.9"/><path d="M9.5 12.5 L19 22 M19 12.5 L9.5 22" stroke="#b4b4b4" stroke-width="4.4"/><path d="M9.5 12.5 L19 22 M19 12.5 L9.5 22" stroke="#e2e2e2" stroke-width="2.4"/></svg>
</body></html>
